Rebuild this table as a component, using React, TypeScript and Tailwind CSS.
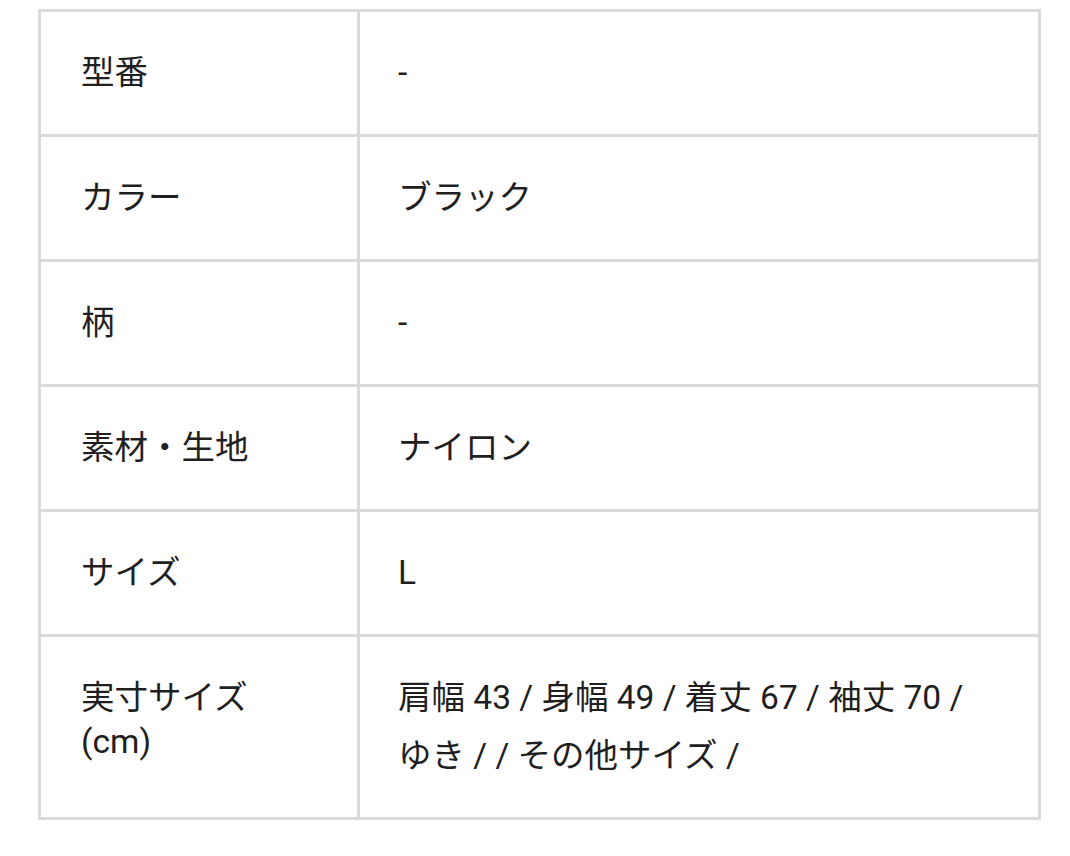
const rows: { label: string[]; value: string }[] = [
  { label: ["型番"], value: "-" },
  { label: ["カラー"], value: "ブラック" },
  { label: ["柄"], value: "-" },
  { label: ["素材・生地"], value: "ナイロン" },
  { label: ["サイズ"], value: "L" },
  {
    label: ["実寸サイズ", "(cm)"],
    value: "肩幅 43 / 身幅 49 / 着丈 67 / 袖丈 70 / ゆき / / その他サイズ /",
  },
];

export default function App() {
  return (
    <div
      className="min-h-[856px] bg-white pt-[9px] pl-[38px] text-[#1f1f1f]"
      style={{ fontFamily: 'Roboto, "Noto Sans CJK JP", sans-serif' }}
    >
      <div className="grid w-[1003px] grid-cols-[319px_681px] border-l-[3px] border-t-[3px] border-[#dadada]">
        {rows.map((row) => (
          <div key={row.label[0]} className="contents">
            <div className="border-b-[3px] border-r-[3px] border-[#dadada] pl-[40px] pr-4 pt-[39px] pb-[32px] text-[33.5px] leading-[44px]">
              {row.label.map((l) => (
                <div key={l}>{l}</div>
              ))}
            </div>
            <div className="border-b-[3px] border-r-[3px] border-[#dadada] pl-[38px] pr-[50px] py-[32px] text-[33.5px] leading-[58px]">
              {row.value}
            </div>
          </div>
        ))}
      </div>
    </div>
  );
}
